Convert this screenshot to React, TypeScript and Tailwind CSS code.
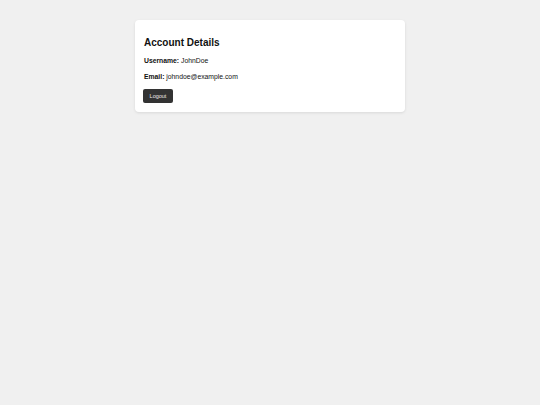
const App = () => {
    return (
        <div className="min-h-[405px] w-full bg-[#f0f0f0] pt-[20px] font-['Liberation_Sans',Arial,sans-serif] text-[#111]">
            <div className="mx-auto w-[270px] rounded-[4px] bg-white px-[9px] pb-[9px] pt-[17px] shadow-[0_1px_3px_rgba(0,0,0,0.1)]">
                <h2 className="text-[10px] font-bold leading-[12px]">Account Details</h2>
                <p className="mt-[8px] text-[6.8px] leading-[8px]">
                    <span className="font-bold">Username:</span> JohnDoe
                </p>
                <p className="mt-[8px] text-[6.8px] leading-[8px]">
                    <span className="font-bold">Email:</span> johndoe@example.com
                </p>
                <button className="-ml-px mt-[8px] flex h-[14px] w-[30px] items-center justify-center rounded-[2px] bg-[#333333] text-[5.5px] text-[#e8e8e8]">
                    Logout
                </button>
            </div>
        </div>
    );
};

export default App;
